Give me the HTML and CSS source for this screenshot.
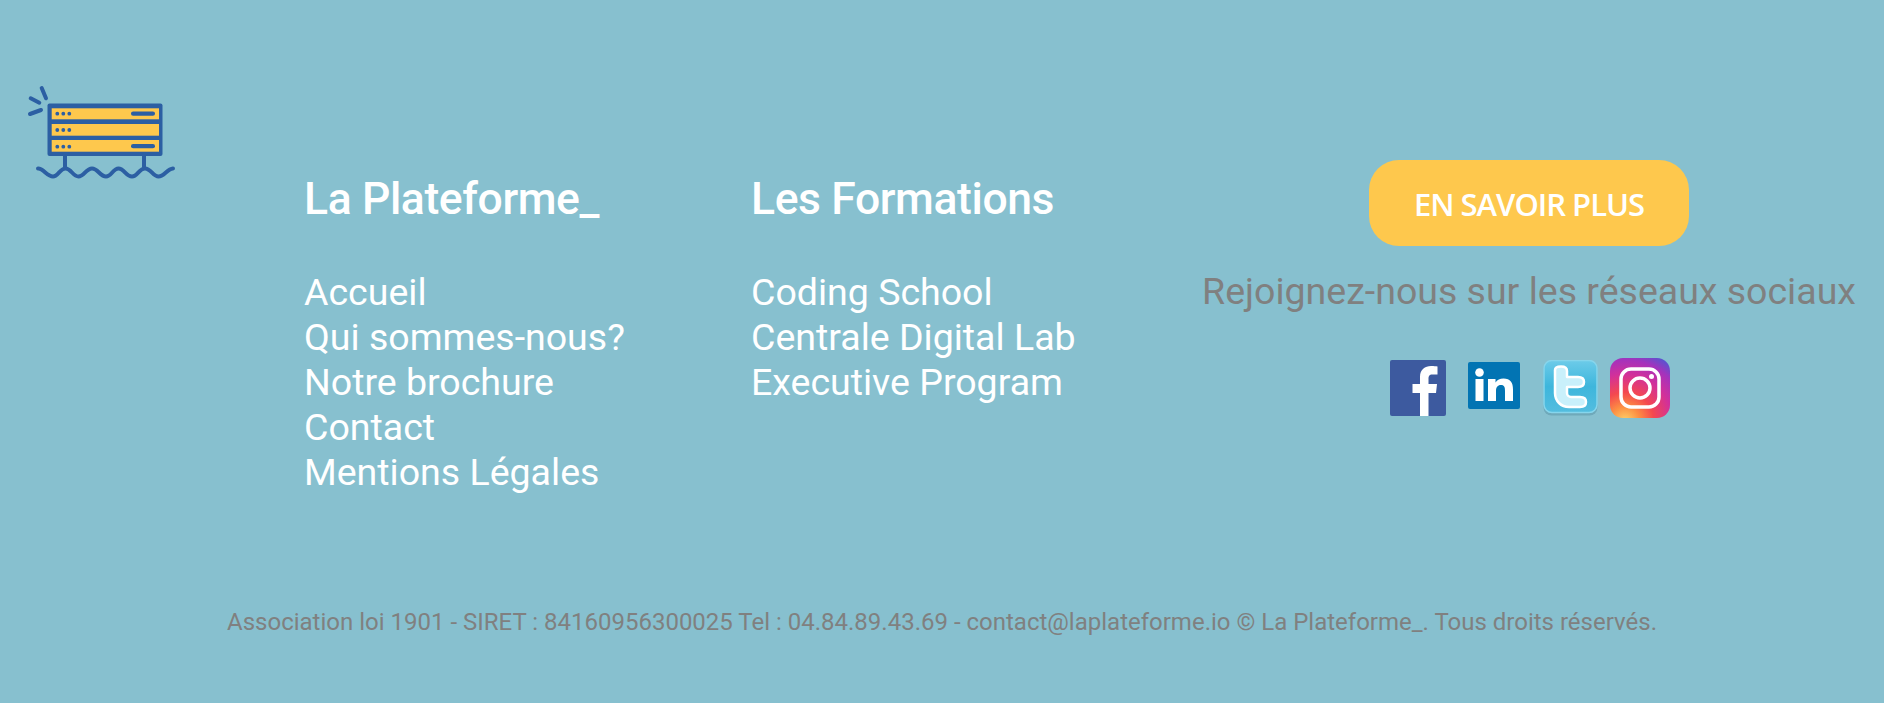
FILE: index.html
```html
<!DOCTYPE html>
<html lang="fr">
<head>
<meta charset="utf-8">
<title>La Plateforme_</title>
<link rel="stylesheet" href="styles.css">
</head>
<body>
<footer class="footer">
  <div class="top">
    <a class="logo" href="#" aria-label="La Plateforme_">
      <svg viewBox="0 0 190 120" width="190" height="120">
        <g fill="none" stroke="#2c5fa3" stroke-linecap="round">
          <path stroke-width="4" d="M31.700 18 L36 28.300 M20.700 28.300 L29.300 32.700 M20 44 L31 40"/>
          <path stroke-width="4" stroke-linejoin="round" d="M28 98.500 C33 98 37 106.500 43 106.500 C48 106.500 50 98.500 55.500 98.500 C61 98.500 63 106.500 68.500 106.500 C74 106.500 76 98.500 82 98.500 C88 98.500 90 106.500 96 106.500 C101.500 106.500 103 98.500 108.500 98.500 C114 98.500 116 106.500 122 106.500 C127.500 106.500 129 98.500 135 98.500 C141 98.500 143 106.500 148.500 106.500 C154 106.500 157 99 163 98.500"/>
          <path stroke-width="4" stroke-linecap="butt" d="M55 86 V98 M134 86 V98"/>
        </g>
        <rect x="37.500" y="33.500" width="115" height="52.500" rx="2" fill="#2c5fa3"/>
        <rect x="41.700" y="38.300" width="107.300" height="11" fill="#fec84d"/>
        <rect x="41.700" y="54" width="107.300" height="11.700" fill="#fec84d"/>
        <rect x="41.700" y="70" width="107.300" height="11.700" fill="#fec84d"/>
        <g fill="#2c5fa3">
          <circle cx="47.300" cy="43.700" r="1.900"/><circle cx="53.300" cy="43.700" r="1.900"/><circle cx="59.300" cy="43.700" r="1.900"/>
          <circle cx="47.300" cy="60" r="1.900"/><circle cx="53.300" cy="60" r="1.900"/><circle cx="59.300" cy="60" r="1.900"/>
          <circle cx="47.300" cy="76.700" r="1.900"/><circle cx="53.300" cy="76.700" r="1.900"/><circle cx="59.300" cy="76.700" r="1.900"/>
          <rect x="121" y="41.500" width="24" height="4.300" rx="2.100"/>
          <rect x="121" y="74" width="24" height="4.300" rx="2.100"/>
        </g>
      </svg>
    </a>
    <nav class="col col-a">
      <h2 class="col-title">La Plateforme_</h2>
      <ul class="links">
        <li><a href="#">Accueil</a></li>
        <li><a href="#">Qui sommes-nous?</a></li>
        <li><a href="#">Notre brochure</a></li>
        <li><a href="#">Contact</a></li>
        <li><a href="#">Mentions Légales</a></li>
      </ul>
    </nav>
    <nav class="col col-b">
      <h2 class="col-title">Les Formations</h2>
      <ul class="links">
        <li><a href="#">Coding School</a></li>
        <li><a href="#">Centrale Digital Lab</a></li>
        <li><a href="#">Executive Program</a></li>
      </ul>
    </nav>
    <div class="cta">
      <a class="btn" href="#">EN SAVOIR PLUS</a>
      <p class="join">Rejoignez-nous sur les réseaux sociaux</p>
      <div class="socials">
        <svg class="ico-fb" viewBox="0 0 56 56" width="56" height="56" aria-label="Facebook">
          <rect width="56" height="56" rx="2" fill="#3d5a9f"/>
          <path fill="#fff" d="M30 56 V33 H22.500 V24 H30 V17 C30 9.500 35 6 41 6 C44 6 46 6.300 47.500 6.500 V14.500 H42.500 C39 14.500 38.500 16.500 38.500 19 V24 H47 L46 33 H38.500 V56 Z"/>
        </svg>
        <svg class="ico-in" viewBox="0 0 52 47" width="52" height="47" aria-label="LinkedIn">
          <rect width="52" height="47" rx="2" fill="#0274b3"/>
          <circle cx="11.500" cy="10.500" r="4.300" fill="#fff"/>
          <rect x="7.500" y="17" width="8" height="22" fill="#fff"/>
          <path fill="#fff" d="M20 17 H27.500 V20.500 C29 18 32 16.500 35.500 16.500 C42.500 16.500 45 20.500 45 27.500 V39 H37 V29 C37 25.500 36.500 23 33 23 C29.500 23 28 25.500 28 29 V39 H20 Z"/>
        </svg>
        <svg class="ico-tw" viewBox="0 0 56 56" width="56" height="56" aria-label="Twitter">
          <defs>
            <linearGradient id="tw" x1="0" y1="0" x2="0" y2="1">
              <stop offset="0" stop-color="#6ccbe9"/>
              <stop offset="0.5" stop-color="#3eb6dc"/>
              <stop offset="1" stop-color="#53bddf"/>
            </linearGradient>
          </defs>
          <rect x="0.500" y="1.500" width="54" height="54" rx="8" fill="#6fa9ba"/>
          <rect x="1" y="0.500" width="53" height="52" rx="8" fill="url(#tw)" stroke="#86d5ec" stroke-width="1.500"/>
          <path fill="#c9f0fb" stroke="#fff" stroke-width="2.500" stroke-linejoin="round" d="M12 10 C12 7 15 6.500 18 6.500 C22 6.500 24 8.500 24 11 V17 H35 C39 17 41 19 41 22 C41 25 39 27 35 27 H24 V33 C24 35.500 26 37 28 37 H37 C41 37 43 39 43 42 C43 45 41 47 37 47 H26 C18 47 12 41 12 33 Z"/>
        </svg>
        <svg class="ico-ig" viewBox="0 0 60 60" width="60" height="60" aria-label="Instagram">
          <defs>
            <radialGradient id="ig" cx="0.250" cy="1.050" r="1.200">
              <stop offset="0" stop-color="#fed36a"/>
              <stop offset="0.200" stop-color="#fd8f43"/>
              <stop offset="0.400" stop-color="#f4484f"/>
              <stop offset="0.650" stop-color="#d2309a"/>
              <stop offset="0.850" stop-color="#a532bc"/>
              <stop offset="1" stop-color="#5b52cf"/>
            </radialGradient>
          </defs>
          <rect width="60" height="60" rx="13" fill="url(#ig)"/>
          <rect x="11" y="11" width="38" height="38" rx="10" fill="none" stroke="#fff" stroke-width="3.500"/>
          <circle cx="30" cy="30" r="10" fill="none" stroke="#fff" stroke-width="3.500"/>
          <circle cx="41.500" cy="18.500" r="2.500" fill="#fff"/>
        </svg>
      </div>
    </div>
  </div>
  <p class="legal">Association loi 1901 - SIRET : 84160956300025 Tel : 04.84.89.43.69 - contact@laplateforme.io © La Plateforme_. Tous droits réservés.</p>
</footer>
</body>
</html>
```

FILE: styles.css
```css
* { box-sizing: border-box; }
html, body { margin: 0; height: 100%; }
body {
  background: #87c0cf;
  font-family: Roboto, "Liberation Sans", sans-serif;
  overflow: hidden;
}
a { color: inherit; text-decoration: none; }
.footer {
  height: 703px;
  display: flex;
  flex-direction: column;
}
.top {
  display: flex;
  align-items: flex-start;
  height: 607px;
  padding-top: 70px;
  padding-left: 10px;
}
.logo { display: block; width: 294px; flex: none; }
.logo svg { display: block; }
.col { flex: none; padding-top: 103px; color: #fff; }
.col-a { width: 447px; }
.col-b { width: 448px; }
.col-title {
  margin: 0 0 45px;
  font-size: 44.500px;
  line-height: 52px;
  font-weight: 500;
  letter-spacing: -0.4px;
}
.links {
  margin: 0;
  padding: 0;
  list-style: none;
  font-size: 37.500px;
  line-height: 45px;
}
.cta {
  flex: none;
  width: 660px;
  padding-top: 90px;
  display: flex;
  flex-direction: column;
  align-items: center;
}
.btn {
  display: flex;
  align-items: center;
  justify-content: center;
  width: 320px;
  height: 86px;
  padding-top: 2px;
  border-radius: 30px;
  background: #fec84d;
  color: #fff;
  font-family: "Open Sans", sans-serif;
  font-size: 31px;
  font-weight: 600;
  letter-spacing: -1px;
}
.join {
  margin: 23px 0 0;
  color: #808080;
  font-size: 37.500px;
  line-height: 45px;
  white-space: nowrap;
}
.socials {
  display: flex;
  align-items: center;
  margin-top: 44px;
  margin-left: 2px;
}
.ico-fb { display: block; }
.ico-in { display: block; margin-left: 22px; margin-top: -6px; }
.ico-tw { display: block; margin-left: 23px; }
.ico-ig { display: block; margin-left: 11px; }
.legal {
  margin: 0;
  text-align: center;
  color: #808080;
  font-size: 24px;
  line-height: 30px;
}
```
